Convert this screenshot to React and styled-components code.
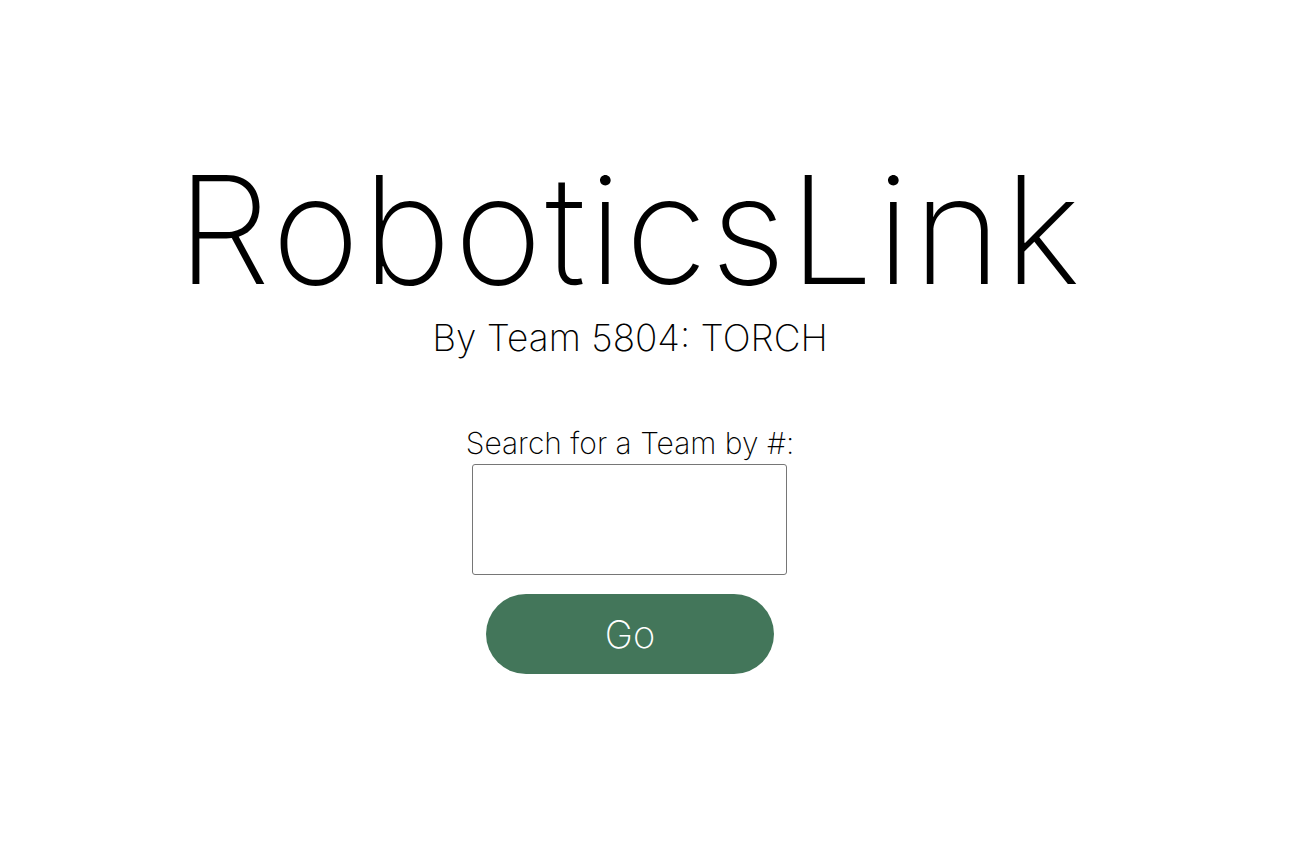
import React, { useState } from "react";
import styled, { createGlobalStyle } from "styled-components";

const GlobalStyle = createGlobalStyle`
  html, body {
    margin: 0;
    padding: 0;
    background: #ffffff;
    font-family: "Inter", "Noto Sans", sans-serif;
    color: #000;
  }
`;

const Page = styled.div`
  width: 1260px;
  display: flex;
  flex-direction: column;
  align-items: center;
  padding-top: 155px;
`;

const Title = styled.h1`
  margin: 0;
  font-size: 150px;
  font-weight: 200;
  letter-spacing: 3px;
  line-height: 1;
`;

const Subtitle = styled.h2`
  margin: 14px 0 0;
  font-size: 37px;
  font-weight: 200;
  line-height: 1;
`;

const SearchForm = styled.form`
  margin-top: 72px;
  display: flex;
  flex-direction: column;
  align-items: center;
`;

const Label = styled.label`
  font-size: 30px;
  font-weight: 200;
  line-height: 1;
  margin-bottom: 6px;
`;

const TeamInput = styled.input`
  box-sizing: border-box;
  width: 315px;
  height: 111px;
  border: 1px solid #767676;
  border-radius: 3px;
  font-family: inherit;
  font-size: 30px;
  font-weight: 200;
  text-align: center;
  outline: none;
`;

const GoButton = styled.button`
  margin-top: 19px;
  width: 288px;
  height: 80px;
  border: none;
  border-radius: 40px;
  background: #43765a;
  color: #fff;
  font-family: inherit;
  font-size: 38px;
  font-weight: 200;
  cursor: pointer;
`;

export default function App() {
  const [team, setTeam] = useState("");

  return (
    <>
      <GlobalStyle />
      <Page>
        <Title>RoboticsLink</Title>
        <Subtitle>By Team 5804: TORCH</Subtitle>
        <SearchForm onSubmit={(e) => e.preventDefault()}>
          <Label htmlFor="team">Search for a Team by #:</Label>
          <TeamInput
            id="team"
            value={team}
            onChange={(e) => setTeam(e.target.value)}
          />
          <GoButton type="submit">Go</GoButton>
        </SearchForm>
      </Page>
    </>
  );
}
